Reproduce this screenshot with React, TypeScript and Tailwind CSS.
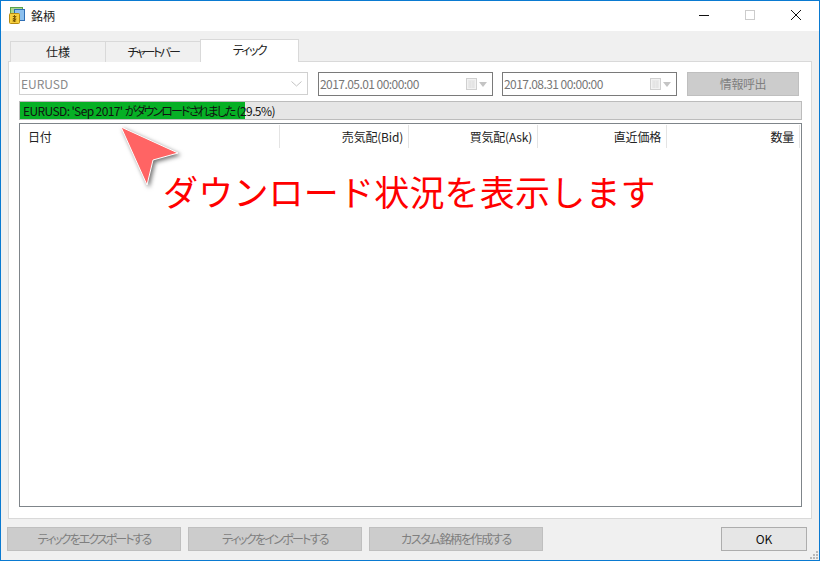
const font = { fontFamily: '"Noto Sans CJK JP", "Liberation Sans", sans-serif' };

function AppIcon() {
  return (
    <svg width="18" height="18" viewBox="0 0 18 18" className="shrink-0">
      <rect x="2.5" y="0.5" width="12" height="8" fill="#a9d68f" stroke="#5aa24a" />
      <rect x="6.5" y="2.5" width="10" height="11" fill="#8cc0ee" stroke="#2f6fb5" />
      <rect x="1.5" y="6.5" width="10" height="10" rx="1" fill="#f7cf3d" stroke="#b58a10" />
      <path d="M6.5 8v7M4.8 9.5h3.4L4.8 12h3.4L4.8 14h3.4" stroke="#7a5a05" strokeWidth="1" fill="none" />
    </svg>
  );
}

function WindowControls() {
  return (
    <div className="flex items-center h-full">
      <svg width="46" height="30" viewBox="0 0 46 30">
        <path d="M18 14.5h10" stroke="#111" strokeWidth="1" />
      </svg>
      <svg width="46" height="30" viewBox="0 0 46 30">
        <rect x="18.5" y="9.5" width="9" height="9" fill="none" stroke="#ccc" />
      </svg>
      <svg width="46" height="30" viewBox="0 0 46 30">
        <path d="M18 9l10 10M28 9l-10 10" stroke="#111" strokeWidth="1" />
      </svg>
    </div>
  );
}

function DateField({ value, className }: { value: string; className: string }) {
  return (
    <div className={`h-[24px] border border-[#7a7a7a] bg-white flex items-center justify-between pl-[1px] pr-[5px] text-[12px] tracking-[-0.55px] text-[#777] ${className}`}>
      <span>{value}</span>
      <span className="flex items-center gap-[2px]">
        <svg width="11" height="12" viewBox="0 0 11 12">
          <rect x="0.5" y="0.5" width="10" height="11" fill="#f2f2f2" stroke="#d0d0d0" />
          <path d="M2 3h7M2 5h7M2 7h7M2 9h7M4 3v7M7 3v7" stroke="#e0e0e0" strokeWidth="1" />
        </svg>
        <svg width="8" height="5" viewBox="0 0 8 5">
          <path d="M0 0h8L4 5z" fill="#c4c4c4" />
        </svg>
      </span>
    </div>
  );
}

function DisabledButton({ label, className }: { label: string; className: string }) {
  return (
    <div className={`h-[24px] bg-[#cccccc] border border-[#bfbfbf] flex items-center justify-center text-[12px] text-[#7f7f7f] ${className}`}>
      {label}
    </div>
  );
}

function HeaderCell({ label, className }: { label: string; className: string }) {
  return (
    <div className={`h-[23px] border-r border-[#e4e4e4] flex items-center pr-[5px] text-[12px] tracking-[-0.2px] text-[#222] ${className}`}>
      {label}
    </div>
  );
}

export default function App() {
  return (
    <div style={font} className="relative w-[820px] h-[561px] overflow-hidden bg-[#f0f0f0] border border-[#0a7ad1] flex flex-col">
      {/* Title bar */}
      <div className="h-[30px] bg-white flex items-center justify-between pl-[7px] shrink-0">
        <div className="flex items-center gap-[5px] text-[12px] text-[#222]">
          <AppIcon />
          <span>銘柄</span>
        </div>
        <WindowControls />
      </div>

      {/* Tabs */}
      <div className="flex items-end pl-[9px] h-[31px] shrink-0 relative z-10 -mb-[1px]">
        <div className="w-[96px] h-[21px] bg-[#f0f0f0] border border-b-0 border-[#d9d9d9] flex items-center justify-center text-[12px] text-[#222]">仕様</div>
        <div className="w-[95px] h-[21px] bg-[#f0f0f0] border border-b-0 border-l-0 border-[#d9d9d9] flex items-center justify-center text-[12px] tracking-[-2.3px] [font-feature-settings:'palt'] text-[#222]">チャートバー</div>
        <div className="w-[99px] h-[23px] -ml-[1px] bg-white border border-b-0 border-[#d9d9d9] flex items-center justify-center text-[12px] tracking-[-1.6px] [font-feature-settings:'palt'] text-[#222] pb-[3px]">ティック</div>
      </div>

      {/* Panel */}
      <div className="ml-[7px] mr-[7px] h-[458px] bg-white border border-[#d9d9d9] pt-[10px] pl-[10px] pr-[9px] flex flex-col shrink-0">
        <div className="flex items-start">
          <div className="w-[289px] h-[23px] border border-[#d0d0d0] bg-white flex items-center justify-between pl-[1px] pr-[5px] text-[12px] text-[#8a8a8a]">
            <span>EURUSD</span>
            <svg width="11" height="6" viewBox="0 0 11 6">
              <path d="M0.5 0.5L5.5 5l5-4.5" fill="none" stroke="#c4c4c4" strokeWidth="1" />
            </svg>
          </div>
          <DateField value="2017.05.01 00:00:00" className="w-[175px] ml-[10px]" />
          <DateField value="2017.08.31 00:00:00" className="w-[175px] ml-[9px]" />
          <DisabledButton label="情報呼出" className="w-[112px] ml-[10px] tracking-[-0.4px]" />
        </div>

        {/* Progress */}
        <div className="relative w-[783px] h-[19px] mt-[5px] bg-[#e6e6e6] border border-[#bcbcbc] shrink-0">
          <div className="absolute left-0 top-0 h-full w-[225px] bg-[#06b025]" />
          <div className="absolute left-[3px] top-0 h-full flex items-center text-[12px] tracking-[-0.6px] text-[#111] whitespace-pre">
            <span>EURUSD: 'Sep 2017' </span>
            <span className="tracking-[-1.9px] [font-feature-settings:'palt']">がダウンロードされました</span>
            <span> (29.5%)</span>
          </div>
        </div>

        {/* List */}
        <div className="w-[783px] h-[384px] mt-[3px] border border-[#7f858a] bg-white pt-[1px]">
          <div className="flex">
            <HeaderCell label="日付" className="w-[260px] pl-[8px]" />
            <HeaderCell label="売気配(Bid)" className="w-[129px] justify-end" />
            <HeaderCell label="買気配(Ask)" className="w-[129px] justify-end" />
            <HeaderCell label="直近価格" className="w-[129px] justify-end" />
            <HeaderCell label="数量" className="w-[133px] justify-end" />
          </div>
        </div>
      </div>

      {/* Footer buttons */}
      <div className="flex items-start pl-[6px] pt-[8px] relative">
        <DisabledButton label="ティックをエクスポートする" className="w-[174px] tracking-[-1.9px] [font-feature-settings:'palt']" />
        <DisabledButton label="ティックをインポートする" className="w-[174px] ml-[7px] tracking-[-1.7px] [font-feature-settings:'palt']" />
        <DisabledButton label="カスタム銘柄を作成する" className="w-[174px] ml-[7px] tracking-[-1.3px] [font-feature-settings:'palt']" />
        <div className="w-[86px] h-[24px] ml-[178px] bg-[#e6e6e6] border border-[#adadad] flex items-center justify-center text-[12px] text-[#111]">OK</div>
      </div>

      {/* Resize grip */}
      <svg width="10" height="10" viewBox="0 0 10 10" className="absolute right-0 bottom-0">
        <path d="M7 1h2v2H7zM4 4h2v2H4zM7 4h2v2H7zM1 7h2v2H1zM4 7h2v2H4zM7 7h2v2H7z" fill="#b8b8b8" />
      </svg>

      {/* Annotation */}
      <svg width="72" height="68" viewBox="0 0 72 68" className="absolute left-[117px] top-[123px] drop-shadow-[2px_2px_2px_rgba(0,0,0,0.55)]">
        <path d="M3 3L60 29 35 36 29 61z" fill="#ff6464" stroke="#fff" strokeWidth="1" />
      </svg>
      <div className="absolute left-[162px] top-[165px] text-[35px] tracking-[0.2px] leading-[50px] text-[#ff0000] whitespace-nowrap">
        ダウンロード状況を表示します
      </div>
    </div>
  );
}
